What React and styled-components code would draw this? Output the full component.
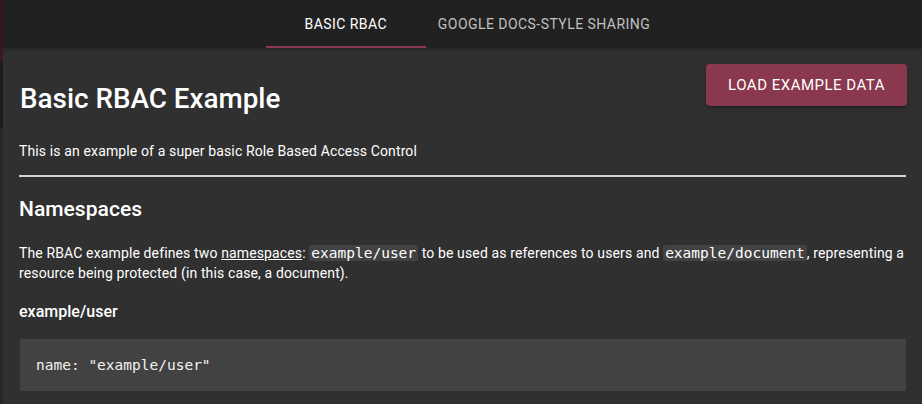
import React from "react";
import styled, { createGlobalStyle } from "styled-components";

const Global = createGlobalStyle`
  html, body { margin: 0; padding: 0; background: #292929; }
  body { font-family: Roboto, "Noto Sans", sans-serif; color: #fff; }
  * { box-sizing: border-box; }
`;

const Shell = styled.div`
  display: flex;
  width: 922px;
  height: 404px;
  overflow: hidden;
`;

const SideStrip = styled.div`
  width: 3px;
  flex: none;
  display: flex;
  flex-direction: column;
`;

const StripPart = styled.div`
  height: ${(p) => p.$h};
  flex: ${(p) => (p.$h ? "none" : "1")};
  background: ${(p) => p.$c};
`;

const Main = styled.div`
  flex: 1;
  display: flex;
  flex-direction: column;
  background: #303030;
  min-width: 0;
`;

const TabBar = styled.div`
  height: 48px;
  background: #212121;
  display: flex;
  justify-content: center;
  box-shadow: 0 2px 4px rgba(0, 0, 0, 0.25);
  position: relative;
  z-index: 1;
  padding-left: 3px;
`;

const Tab = styled.div`
  min-width: 160px;
  padding: 0 12px;
  display: flex;
  align-items: center;
  justify-content: center;
  font-size: 14px;
  font-weight: 400;
  letter-spacing: 0.45px;
  text-transform: uppercase;
  color: ${(p) => (p.$active ? "#ffffff" : "rgba(255,255,255,0.72)")};
  border-bottom: 2px solid ${(p) => (p.$active ? "#8b3a4f" : "transparent")};
  padding-top: 2px;
`;

const Content = styled.div`
  padding: 16px 16px 0 16px;
  display: flow-root;
`;

const LoadButton = styled.button`
  float: right;
  height: 42px;
  min-width: 199px;
  margin-right: -1px;
  padding: 0 22px;
  background: #8a384d;
  color: #fff;
  border: none;
  border-radius: 4px;
  font-family: Roboto, sans-serif;
  font-size: 15px;
  font-weight: 400;
  letter-spacing: 0.5px;
  text-transform: uppercase;
  box-shadow: 0 3px 1px -2px rgba(0,0,0,0.2), 0 2px 2px 0 rgba(0,0,0,0.14), 0 1px 5px 0 rgba(0,0,0,0.12);
`;

const Title = styled.h1`
  margin: 18px 0 0 1px;
  font-family: "Roboto Medium", Roboto, sans-serif;
  font-size: 27.8px;
  font-weight: 500;
  line-height: 1.2;
  color: #fff;
`;

const Para = styled.p`
  margin: ${(p) => p.$m || "14px 0 0 0"};
  font-size: 14px;
  line-height: 20px;
  letter-spacing: 0.13px;
  color: #fff;
`;

const Rule = styled.hr`
  border: none;
  border-top: 2px solid #d6d6d6;
  margin: 14px 0 0 0;
  clear: both;
`;

const H2 = styled.h2`
  margin: 20px 0 0 0;
  font-family: "Roboto Medium", Roboto, sans-serif;
  font-size: 21px;
  font-weight: 500;
  line-height: 1.2;
`;

const H3 = styled.h3`
  margin: 19px 0 0 0;
  font-family: "Roboto Medium", Roboto, sans-serif;
  font-size: 16px;
  font-weight: 500;
  line-height: 1.3;
`;

const Link = styled.span`
  text-decoration: underline;
`;

const Code = styled.code`
  font-family: "DejaVu Sans Mono", monospace;
  font-size: 14.5px;
  letter-spacing: 0;
  background: #424242;
  padding: 0 2px;
  border-radius: 2px;
`;

const Pre = styled.pre`
  margin: 17px 0 0 1px;
  background: #424242;
  padding: 16px 16px;
  font-family: "DejaVu Sans Mono", monospace;
  font-size: 14.5px;
  line-height: 20px;
  color: #f2f2f2;
`;

export default function App() {
  return (
    <>
      <Global />
      <Shell>
        <SideStrip>
          <StripPart $h="62px" $c="#3b1822" />
          <StripPart $h="66px" $c="#1c1c1c" />
          <StripPart $c="#262626" />
        </SideStrip>
        <Main>
          <TabBar>
            <Tab $active>Basic RBAC</Tab>
            <Tab>Google Docs-style sharing</Tab>
          </TabBar>
          <Content>
            <LoadButton>Load Example Data</LoadButton>
            <Title>Basic RBAC Example</Title>
            <Para $m="26px 0 0 0">This is an example of a super basic Role Based Access Control</Para>
            <Rule />
            <H2>Namespaces</H2>
            <Para $m="20px 0 0 0">
              The RBAC example defines two <Link>namespaces</Link>: <Code>example/user</Code> to be used as
              references to users and <Code>example/document</Code>, representing a resource being protected
              (in this case, a document).
            </Para>
            <H3>example/user</H3>
            <Pre>name: "example/user"</Pre>
          </Content>
        </Main>
      </Shell>
    </>
  );
}
